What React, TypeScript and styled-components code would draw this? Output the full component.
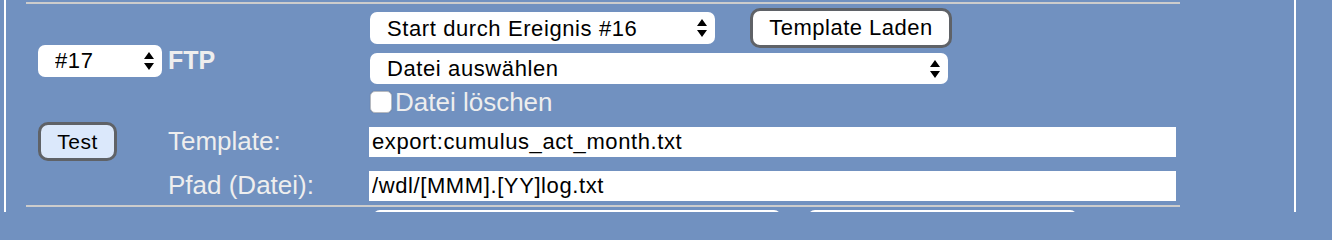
import React from 'react';
import styled, { createGlobalStyle } from 'styled-components';

const GlobalStyle = createGlobalStyle`
  html, body {
    margin: 0;
    height: 212px;
    overflow: hidden;
    background: #7191c0;
  }
  body {
    font-family: "Liberation Sans", Arial, sans-serif;
  }
`;

const Frame = styled.div`
  box-sizing: border-box;
  margin-left: 4px;
  width: 1292px;
  height: 212px;
  overflow: hidden;
  padding: 2px 0 0 20px;
  border-left: 2px solid #fff;
  border-right: 2px solid #fff;
`;

const Section = styled.section`
  width: 1154px;
`;

const Rule = styled.hr`
  margin: 0;
  border: 0;
  height: 2px;
  background: #cccccc;
`;

const Grid = styled.div`
  display: grid;
  grid-template-columns: 142px 201px 1fr;
  row-gap: 9px;
  padding: 4px 0;
  align-items: center;
`;

const Cell = styled.div<{ $indent?: number }>`
  display: flex;
  align-items: center;
  padding-left: ${({ $indent }) => $indent ?? 0}px;
`;

const Title = styled.span`
  font-size: 25px;
  font-weight: bold;
  color: #eeeeee;
`;

const Label = styled.span`
  font-size: 26px;
  color: #eeeeee;
  white-space: nowrap;
`;

const Controls = styled.div`
  display: flex;
  flex-direction: column;
  padding-left: 1px;
`;

const TopLine = styled.div`
  display: flex;
  align-items: center;
  gap: 35px;
  height: 40px;
`;

const SecondLine = styled.div`
  margin-top: 5px;
`;

const SelectWrap = styled.div<{ $width: number; $height: number }>`
  position: relative;
  width: ${({ $width }) => $width}px;
  height: ${({ $height }) => $height}px;
  flex: none;
`;

const NativeSelect = styled.select`
  appearance: none;
  -webkit-appearance: none;
  box-sizing: border-box;
  width: 100%;
  height: 100%;
  margin: 0;
  padding: 0 24px 0 17px;
  border: 0;
  border-radius: 7px;
  background: #fff;
  color: #000;
  font-family: "Liberation Sans", Arial, sans-serif;
  font-size: 22px;
  letter-spacing: 0.6px;
  outline: none;
`;

const Arrows = styled.svg`
  position: absolute;
  right: 8px;
  top: 50%;
  transform: translateY(-50%);
  pointer-events: none;
`;

const ActionButton = styled.button<{ $tint?: boolean; $width: number; $height: number }>`
  box-sizing: border-box;
  width: ${({ $width }) => $width}px;
  height: ${({ $height }) => $height}px;
  padding: 0;
  border: 3px solid #5f6267;
  border-radius: 10px;
  background: ${({ $tint }) => ($tint ? '#dbe8fb' : '#ffffff')};
  color: #000;
  font-family: "Liberation Sans", Arial, sans-serif;
  font-size: ${({ $tint }) => ($tint ? 21 : 22)}px;
  letter-spacing: 0.5px;
`;

const CheckRow = styled.label`
  display: flex;
  align-items: center;
  gap: 3px;
  height: 22px;
  margin-top: 7px;
`;

const Box = styled.input`
  appearance: none;
  -webkit-appearance: none;
  box-sizing: border-box;
  width: 22px;
  height: 22px;
  margin: 0;
  border: 1px solid #b5b9c0;
  border-radius: 5px;
  background: #fff;
  box-shadow: 0 0 1px rgba(0, 0, 0, 0.25);
`;

const TextField = styled.input`
  box-sizing: border-box;
  width: 807px;
  height: 30px;
  margin: 0;
  padding: 0 3px;
  border: 0;
  background: #fff;
  color: #000;
  font-family: "Liberation Sans", Arial, sans-serif;
  font-size: 22px;
  letter-spacing: 0.6px;
  outline: none;
`;

const NextRow = styled.div`
  display: flex;
  gap: 27px;
  padding: 3px 0 0 347px;
`;

interface SelectProps {
  width: number;
  height: number;
  options?: string[];
  arrows?: boolean;
}

const Select = ({ width, height, options = [], arrows = true }: SelectProps) => (
  <SelectWrap $width={width} $height={height}>
    <NativeSelect defaultValue={options[0]}>
      {options.map((o) => (
        <option key={o}>{o}</option>
      ))}
    </NativeSelect>
    {arrows && (
      <Arrows width="10" height="18" viewBox="0 0 10 18">
        <path d="M0 7 L5 0 L10 7 Z M0 11 L5 18 L10 11 Z" fill="#000" />
      </Arrows>
    )}
  </SelectWrap>
);

const App = () => (
  <>
    <GlobalStyle />
    <Frame>
      <Section>
        <Rule />
        <Grid>
          <Cell $indent={12}>
            <Select width={124} height={32} options={['#17']} />
          </Cell>
          <Cell>
            <Title>FTP</Title>
          </Cell>
          <Controls>
            <TopLine>
              <Select width={345} height={32} options={['Start durch Ereignis #16']} />
              <ActionButton type="button" $width={202} $height={40}>
                Template Laden
              </ActionButton>
            </TopLine>
            <SecondLine>
              <Select width={578} height={31} options={['Datei auswählen']} />
            </SecondLine>
            <CheckRow>
              <Box type="checkbox" />
              <Label>Datei löschen</Label>
            </CheckRow>
          </Controls>

          <Cell $indent={12}>
            <ActionButton type="button" $tint $width={79} $height={39}>
              Test
            </ActionButton>
          </Cell>
          <Cell>
            <Label>Template:</Label>
          </Cell>
          <Cell>
            <TextField defaultValue="export:cumulus_act_month.txt" />
          </Cell>

          <Cell />
          <Cell>
            <Label>Pfad (Datei):</Label>
          </Cell>
          <Cell>
            <TextField defaultValue="/wdl/[MMM].[YY]log.txt" />
          </Cell>
        </Grid>
        <Rule />
        <NextRow>
          <Select width={408} height={32} arrows={false} />
          <Select width={269} height={32} arrows={false} />
        </NextRow>
      </Section>
    </Frame>
  </>
);

export default App;
